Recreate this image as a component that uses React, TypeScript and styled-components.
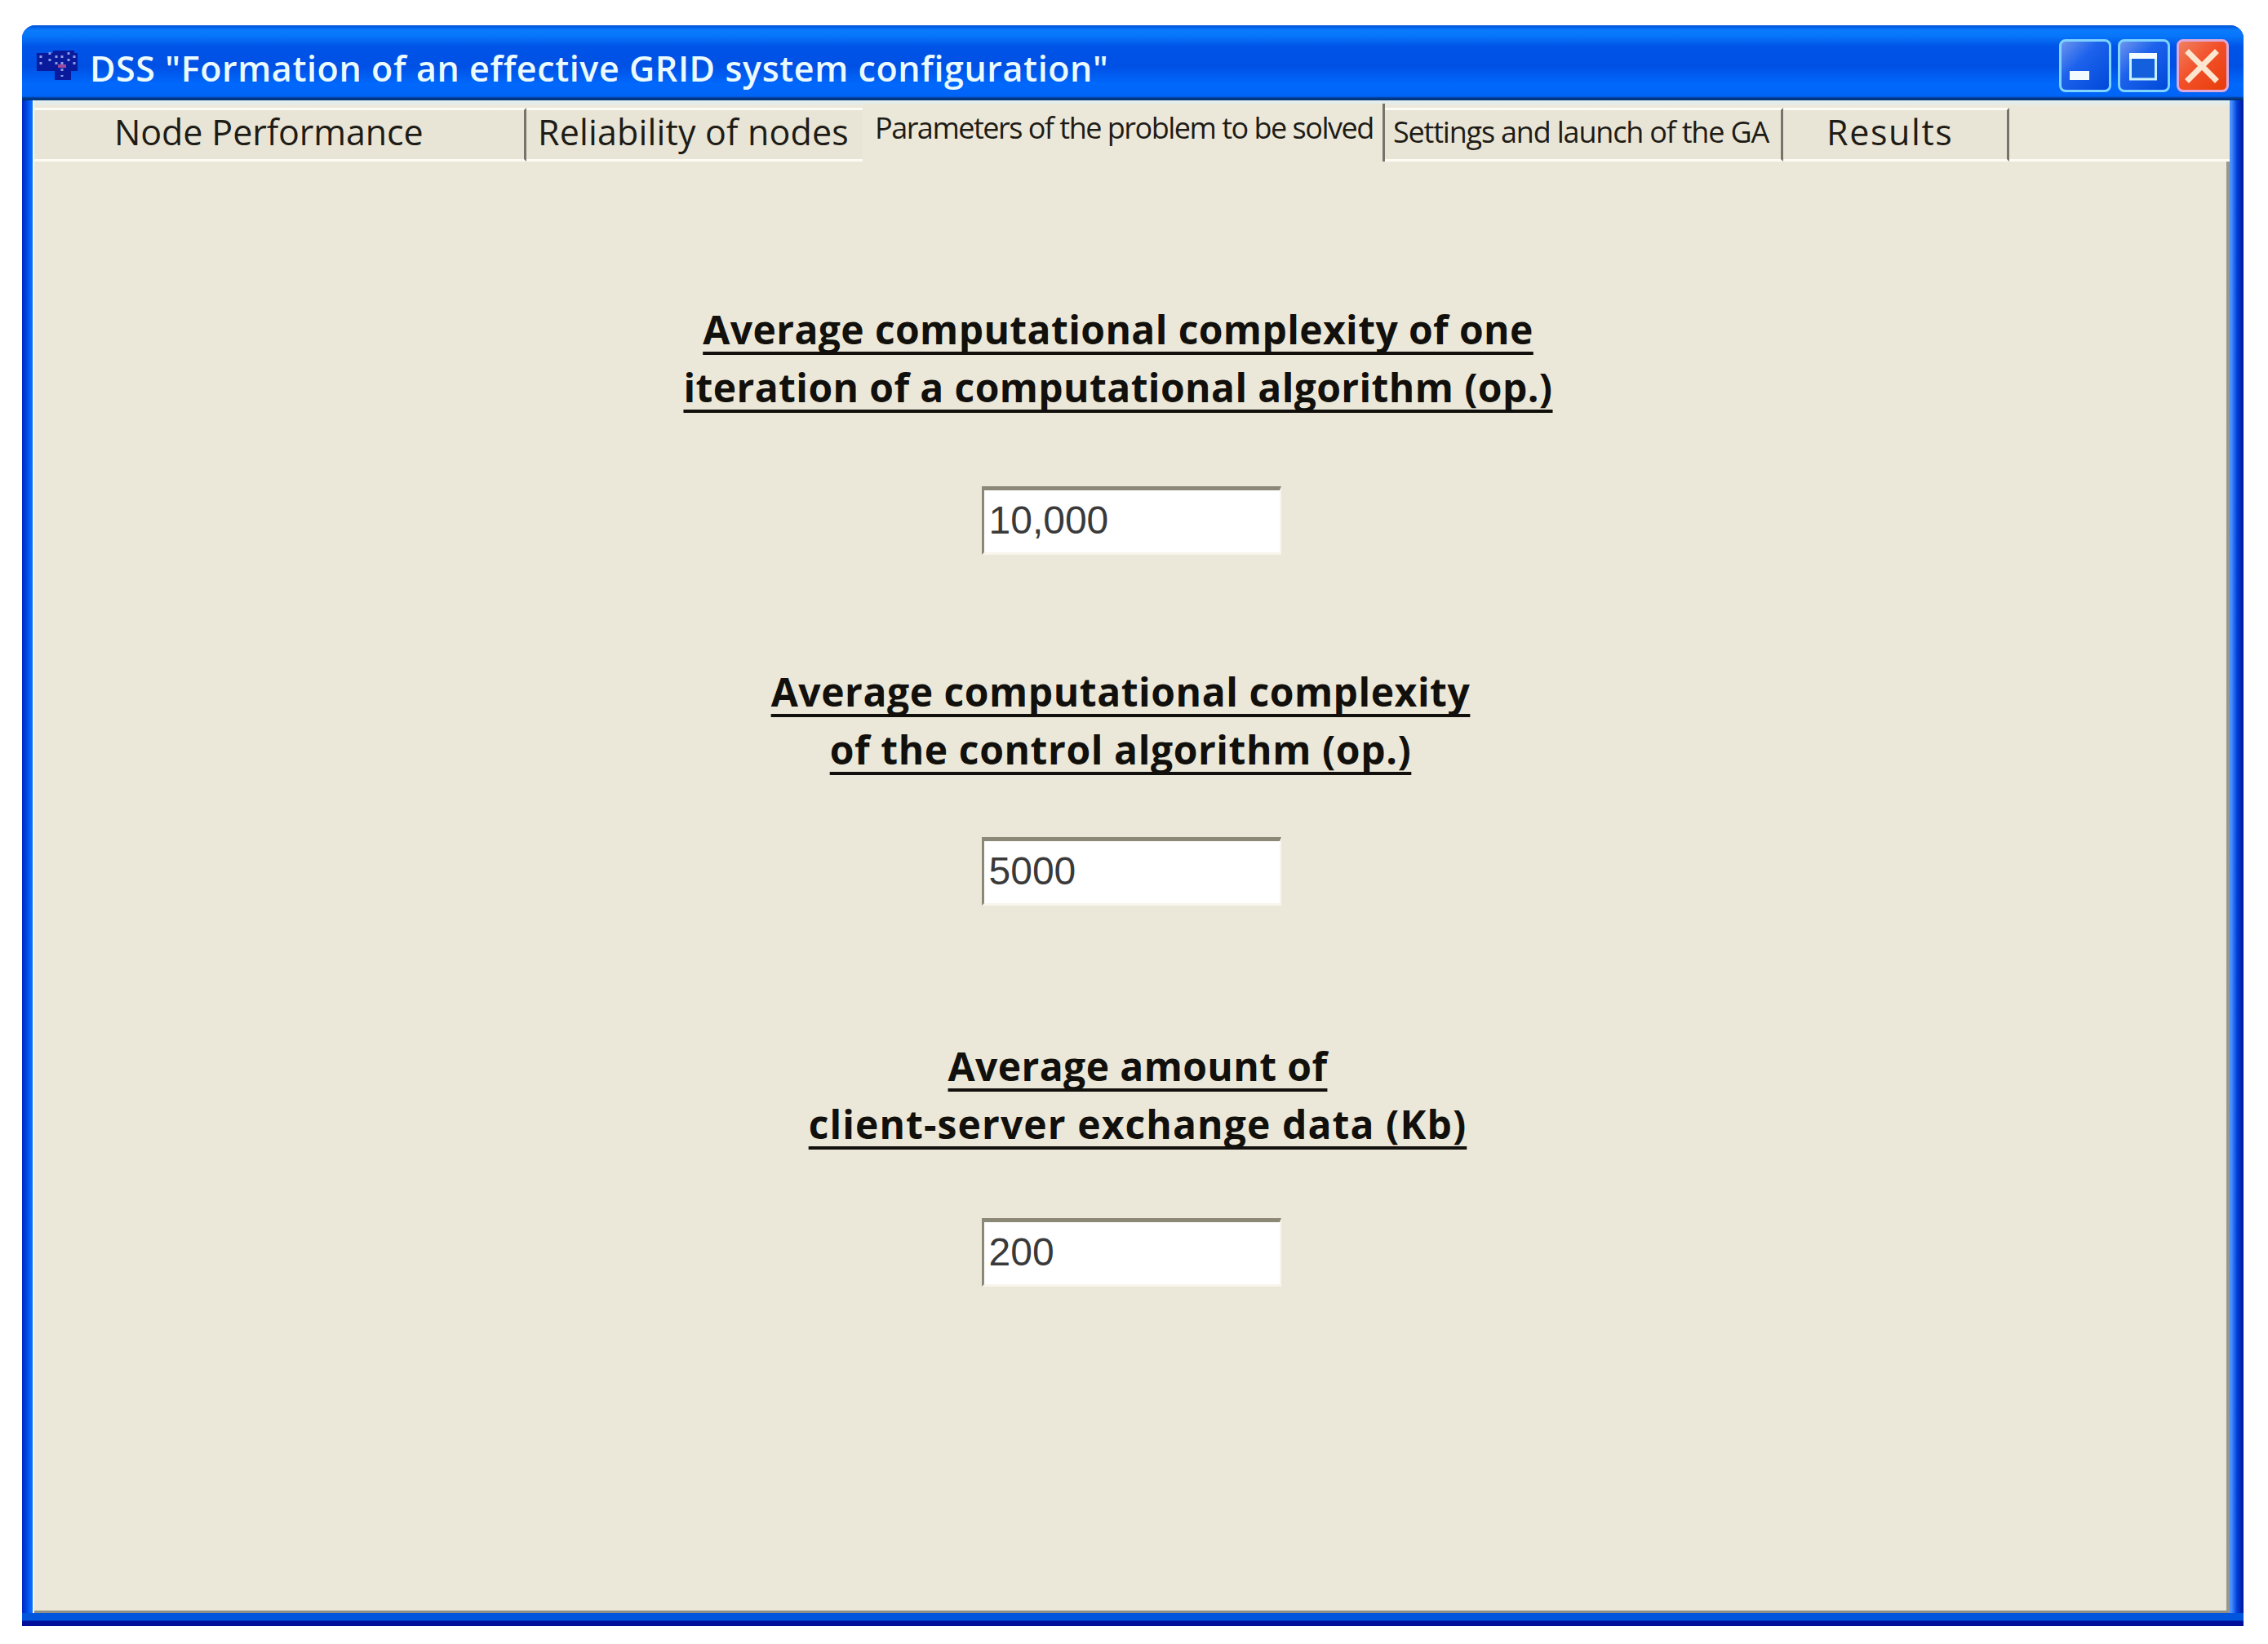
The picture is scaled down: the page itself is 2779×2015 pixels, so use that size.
import React from "react";
import styled, { createGlobalStyle } from "styled-components";

const GlobalStyle = createGlobalStyle`
  html, body {
    margin: 0;
    background: #fff;
  }
`;

const Page = styled.div`
  box-sizing: border-box;
  width: 2779px;
  height: 2015px;
  padding: 31px 30px 22px 27px;
  font-family: "Open Sans", "Liberation Sans", sans-serif;
`;

const Window = styled.div`
  height: 100%;
  display: flex;
  flex-direction: column;
  border-radius: 16px 16px 0 0;
  overflow: hidden;
  background: linear-gradient(0deg, #000f9a 0, #000f9a 6px, #0055dd 7px) bottom / 100% 16px no-repeat,
    linear-gradient(90deg, #0026c4 0, #0050e8 7px, #0a6cff 11px) left / 14px 100% no-repeat,
    linear-gradient(270deg, #00149c 0, #0040d8 8px, #4a90ff 15px) right / 18px 100% no-repeat, #0050e0;
`;

const TitleBar = styled.div`
  flex: none;
  height: 92px;
  box-sizing: border-box;
  display: flex;
  align-items: center;
  padding: 0 18px;
  background: linear-gradient(
    180deg,
    #0052d8 0,
    #0a7cff 6px,
    #0674f8 14px,
    #0054e8 26px,
    #0050e4 50px,
    #0068fc 72px,
    #0064f6 87px,
    #003c94 89px,
    #00306c 92px
  );
`;

const AppIcon = styled.svg`
  width: 50px;
  height: 40px;
  flex: none;
  margin-top: 4px;
`;

const Title = styled.div`
  margin: 12px 0 0 15px;
  font-size: 43px;
  font-weight: 600;
  letter-spacing: 0.6px;
  color: #eafaff;
  white-space: nowrap;
`;

const WindowButtons = styled.div`
  margin: 7px 0 0 auto;
  display: flex;
  gap: 8px;
`;

const CaptionButton = styled.div<{ $close?: boolean }>`
  width: 64px;
  height: 65px;
  box-sizing: border-box;
  display: flex;
  align-items: center;
  justify-content: center;
  border-radius: 8px;
  border: 3px solid ${(p) => (p.$close ? "#e0a8d8" : "#7fd4ff")};
  background: ${(p) =>
    p.$close
      ? "linear-gradient(135deg, #f08060 0, #f2502a 45%, #e83c08 100%)"
      : "linear-gradient(135deg, #6c94ee 0, #1c62ec 40%, #0048d8 100%)"};
`;

const Client = styled.div`
  flex: 1;
  min-height: 0;
  margin: 0 17px 16px 13px;
  display: flex;
  flex-direction: column;
  background: #ece8d9;
  border-left: 2px solid #f4fbff;
`;

const TabStrip = styled.div`
  flex: none;
  height: 75px;
  box-sizing: border-box;
  display: flex;
  align-items: flex-end;
  background: linear-gradient(180deg, #dff0f4 0, #ece8d9 8px);
`;

const Tab = styled.div<{ $width: number; $pad: number; $spacing: number; $small?: boolean; $active?: boolean; $noRule?: boolean }>`
  flex: none;
  box-sizing: border-box;
  width: ${(p) => p.$width}px;
  height: ${(p) => (p.$active ? 71 : 66)}px;
  padding: 0 0 ${(p) => (p.$active ? 12 : 8)}px ${(p) => p.$pad}px;
  display: flex;
  align-items: center;
  font-size: ${(p) => (p.$small ? 36 : 43)}px;
  letter-spacing: ${(p) => p.$spacing}px;
  color: #1e1c16;
  white-space: nowrap;
  background: ${(p) => (p.$active ? "#ece8d9" : "#e9e5d6")};
  border-top: ${(p) => (p.$active ? "0" : "3px solid #fdfcf4")};
  border-bottom: ${(p) => (p.$active ? "0" : "3px solid #fdfcf4")};
  border-right: ${(p) => (p.$noRule ? "0" : "3px solid #77736a")};
`;

const TabFiller = styled.div`
  flex: 1;
  height: 66px;
  box-sizing: border-box;
  border-bottom: 3px solid #fdfcf4;
`;

const Panel = styled.div`
  flex: 1;
  min-height: 0;
  box-sizing: border-box;
  display: flex;
  flex-direction: column;
  align-items: center;
  border-right: 4px solid #989890;
  border-bottom: 3px solid #8c8f88;
`;

const Heading = styled.div<{ $top: number; $shift: number }>`
  margin-top: ${(p) => p.$top}px;
  padding-left: ${(p) => Math.max(p.$shift * 2, 0)}px;
  padding-right: ${(p) => Math.max(-p.$shift * 2, 0)}px;
  font-size: 48px;
  line-height: 71px;
  font-weight: 700;
  text-align: center;
  color: #12100c;
  white-space: nowrap;
`;

const HeadingLine = styled.div<{ $spacing: number }>`
  letter-spacing: ${(p) => p.$spacing}px;
  text-decoration: underline;
  text-decoration-thickness: 4px;
  text-underline-offset: 9px;
  text-decoration-skip-ink: none;
`;

const Field = styled.div<{ $top: number }>`
  flex: none;
  box-sizing: border-box;
  width: 367px;
  height: 84px;
  margin-top: ${(p) => p.$top}px;
  margin-left: 2px;
  padding: 0 0 4px 6px;
  display: flex;
  align-items: center;
  background: #fff;
  border-top: 5px solid #8b8878;
  border-left: 3px solid #8b8878;
  border-right: 2px solid #f7f5ec;
  border-bottom: 3px solid #f7f5ec;
  font-family: "Liberation Sans", Arial, sans-serif;
  font-size: 48px;
  color: #3a3a3a;
`;

const tabs = [
  { label: "Node Performance", width: 603, pad: 98, spacing: -0.1 },
  { label: "Reliability of nodes", width: 412, pad: 14, spacing: 0.15, noRule: true },
  { label: "Parameters of the problem to be solved", width: 640, pad: 15, spacing: -1.5, small: true, active: true },
  { label: "Settings and launch of the GA", width: 488, pad: 10, spacing: -1.2, small: true },
  { label: "Results", width: 277, pad: 53, spacing: 1.6 },
];

const sections = [
  {
    lines: [
      { text: "Average computational complexity of one", spacing: 0.4 },
      { text: "iteration of a computational algorithm (op.)", spacing: 0.4 },
    ],
    top: 170,
    shift: -15,
    fieldTop: 86,
    value: "10,000",
  },
  {
    lines: [
      { text: "Average computational complexity", spacing: 0.55 },
      { text: "of the control algorithm (op.)", spacing: 0.6 },
    ],
    top: 132,
    shift: -12,
    fieldTop: 72,
    value: "5000",
  },
  {
    lines: [
      { text: "Average amount of", spacing: 0.4 },
      { text: "client-server exchange data (Kb)", spacing: 1.1 },
    ],
    top: 161,
    shift: 9,
    fieldTop: 80,
    value: "200",
  },
];

export default function App() {
  return (
    <Page>
      <GlobalStyle />
      <Window>
        <TitleBar>
          <AppIcon viewBox="0 0 50 40">
            <rect x="0" y="6" width="50" height="22" fill="#0a1a9c" />
            <rect x="20" y="3" width="26" height="6" fill="#0a1a9c" />
            <rect x="22" y="28" width="20" height="11" fill="#0a1a9c" />
            <path d="M5 9v14M16 5v14M24 9v16M31 9v26M39 5v16M46 9v14" stroke="#8c9ce8" strokeWidth="3" strokeDasharray="3 5" fill="none" />
            <rect x="26" y="20" width="10" height="4" fill="#a04a9c" />
          </AppIcon>
          <Title>DSS "Formation of an effective GRID system configuration"</Title>
          <WindowButtons>
            <CaptionButton>
              <svg width="58" height="59" viewBox="0 0 58 59">
                <rect x="10" y="36" width="24" height="11" fill="#f2fcff" />
              </svg>
            </CaptionButton>
            <CaptionButton>
              <svg width="58" height="59" viewBox="0 0 58 59">
                <rect x="12.5" y="16" width="31" height="30" fill="#1460dc" stroke="#c8f2ff" strokeWidth="3" />
                <rect x="11" y="14" width="34" height="7" fill="#f4fcff" />
              </svg>
            </CaptionButton>
            <CaptionButton $close>
              <svg width="58" height="59" viewBox="0 0 58 59">
                <path d="M12 14L44 46M44 14L12 46" stroke="#fde6d0" strokeWidth="7" strokeLinecap="square" />
              </svg>
            </CaptionButton>
          </WindowButtons>
        </TitleBar>
        <Client>
          <TabStrip>
            {tabs.map((t) => (
              <Tab key={t.label} $width={t.width} $pad={t.pad} $spacing={t.spacing} $small={t.small} $active={t.active} $noRule={t.noRule}>
                {t.label}
              </Tab>
            ))}
            <TabFiller />
          </TabStrip>
          <Panel>
            {sections.map((s) => (
              <React.Fragment key={s.value}>
                <Heading $top={s.top} $shift={s.shift}>
                  {s.lines.map((l) => (
                    <HeadingLine key={l.text} $spacing={l.spacing}>
                      {l.text}
                    </HeadingLine>
                  ))}
                </Heading>
                <Field $top={s.fieldTop}>{s.value}</Field>
              </React.Fragment>
            ))}
          </Panel>
        </Client>
      </Window>
    </Page>
  );
}
